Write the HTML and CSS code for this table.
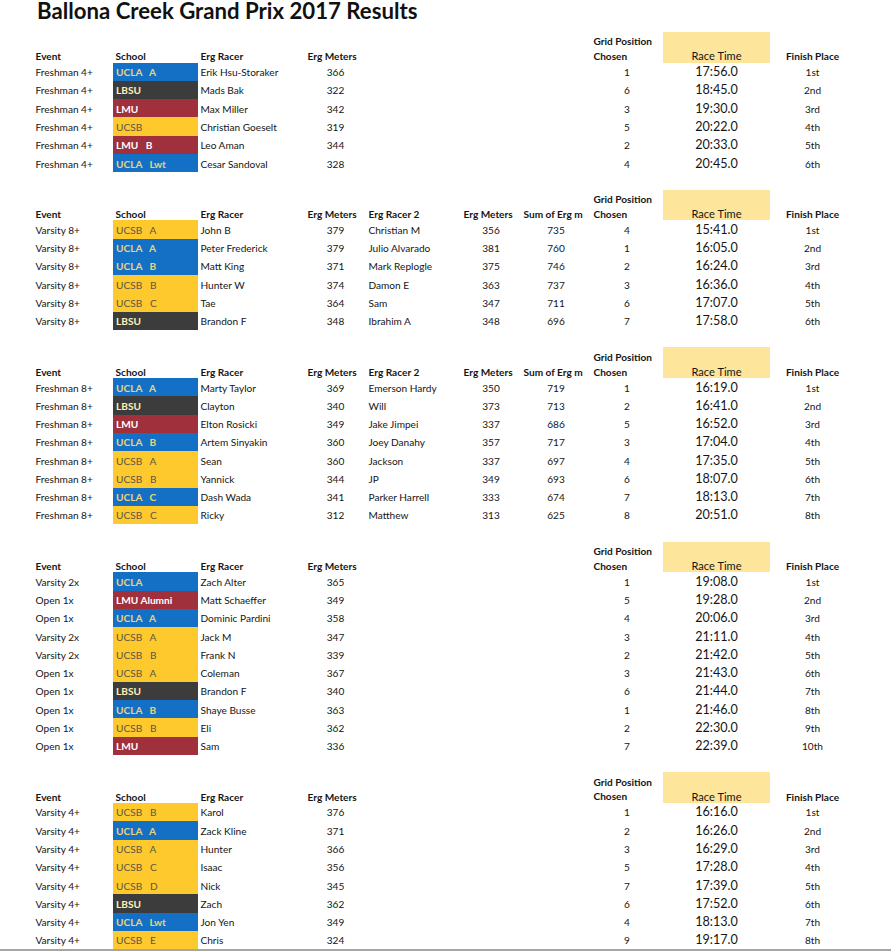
FILE: index.html
```html
<!DOCTYPE html>
<html lang="en">
<head>
<meta charset="utf-8">
<title>Ballona Creek Grand Prix 2017 Results</title>
<link rel="stylesheet" href="styles.css">
</head>
<body>
<h1 class="title">Ballona Creek Grand Prix 2017 Results</h1>

<section class="sheet">
  <div class="row head">
    <span>Event</span><span>School</span><span>Erg Racer</span><span>Erg Meters</span>
    <span class="c8 two">Grid Position<br>Chosen</span><span class="rt">Race Time</span><span class="ctr">Finish Place</span>
  </div>
  <div class="row"><span>Freshman 4+</span><span class="sch ucla">UCLA   A</span><span>Erik Hsu-Storaker</span><span class="ctr">366</span><span class="ctr c8">1</span><span class="time">17:56.0</span><span class="ctr">1st</span></div>
  <div class="row"><span>Freshman 4+</span><span class="sch lbsu">LBSU</span><span>Mads Bak</span><span class="ctr">322</span><span class="ctr c8">6</span><span class="time">18:45.0</span><span class="ctr">2nd</span></div>
  <div class="row"><span>Freshman 4+</span><span class="sch lmu">LMU</span><span>Max Miller</span><span class="ctr">342</span><span class="ctr c8">3</span><span class="time">19:30.0</span><span class="ctr">3rd</span></div>
  <div class="row"><span>Freshman 4+</span><span class="sch ucsb">UCSB</span><span>Christian Goeselt</span><span class="ctr">319</span><span class="ctr c8">5</span><span class="time">20:22.0</span><span class="ctr">4th</span></div>
  <div class="row"><span>Freshman 4+</span><span class="sch lmu">LMU   B</span><span>Leo Aman</span><span class="ctr">344</span><span class="ctr c8">2</span><span class="time">20:33.0</span><span class="ctr">5th</span></div>
  <div class="row"><span>Freshman 4+</span><span class="sch ucla">UCLA   Lwt</span><span>Cesar Sandoval</span><span class="ctr">328</span><span class="ctr c8">4</span><span class="time">20:45.0</span><span class="ctr">6th</span></div>
</section>

<section class="sheet">
  <div class="row head">
    <span>Event</span><span>School</span><span>Erg Racer</span><span>Erg Meters</span><span>Erg Racer 2</span><span>Erg Meters</span><span>Sum of Erg m</span>
    <span class="two">Grid Position<br>Chosen</span><span class="rt">Race Time</span><span class="ctr">Finish Place</span>
  </div>
  <div class="row"><span>Varsity 8+</span><span class="sch ucsb">UCSB   A</span><span>John B</span><span class="ctr">379</span><span>Christian M</span><span class="ctr">356</span><span class="ctr">735</span><span class="ctr">4</span><span class="time">15:41.0</span><span class="ctr">1st</span></div>
  <div class="row"><span>Varsity 8+</span><span class="sch ucla">UCLA   A</span><span>Peter Frederick</span><span class="ctr">379</span><span>Julio Alvarado</span><span class="ctr">381</span><span class="ctr">760</span><span class="ctr">1</span><span class="time">16:05.0</span><span class="ctr">2nd</span></div>
  <div class="row"><span>Varsity 8+</span><span class="sch ucla">UCLA   B</span><span>Matt King</span><span class="ctr">371</span><span>Mark Replogle</span><span class="ctr">375</span><span class="ctr">746</span><span class="ctr">2</span><span class="time">16:24.0</span><span class="ctr">3rd</span></div>
  <div class="row"><span>Varsity 8+</span><span class="sch ucsb">UCSB   B</span><span>Hunter W</span><span class="ctr">374</span><span>Damon E</span><span class="ctr">363</span><span class="ctr">737</span><span class="ctr">3</span><span class="time">16:36.0</span><span class="ctr">4th</span></div>
  <div class="row"><span>Varsity 8+</span><span class="sch ucsb">UCSB   C</span><span>Tae</span><span class="ctr">364</span><span>Sam</span><span class="ctr">347</span><span class="ctr">711</span><span class="ctr">6</span><span class="time">17:07.0</span><span class="ctr">5th</span></div>
  <div class="row"><span>Varsity 8+</span><span class="sch lbsu">LBSU</span><span>Brandon F</span><span class="ctr">348</span><span>Ibrahim A</span><span class="ctr">348</span><span class="ctr">696</span><span class="ctr">7</span><span class="time">17:58.0</span><span class="ctr">6th</span></div>
</section>

<section class="sheet">
  <div class="row head">
    <span>Event</span><span>School</span><span>Erg Racer</span><span>Erg Meters</span><span>Erg Racer 2</span><span>Erg Meters</span><span>Sum of Erg m</span>
    <span class="two">Grid Position<br>Chosen</span><span class="rt">Race Time</span><span class="ctr">Finish Place</span>
  </div>
  <div class="row"><span>Freshman 8+</span><span class="sch ucla">UCLA   A</span><span>Marty Taylor</span><span class="ctr">369</span><span>Emerson Hardy</span><span class="ctr">350</span><span class="ctr">719</span><span class="ctr">1</span><span class="time">16:19.0</span><span class="ctr">1st</span></div>
  <div class="row"><span>Freshman 8+</span><span class="sch lbsu">LBSU</span><span>Clayton</span><span class="ctr">340</span><span>Will</span><span class="ctr">373</span><span class="ctr">713</span><span class="ctr">2</span><span class="time">16:41.0</span><span class="ctr">2nd</span></div>
  <div class="row"><span>Freshman 8+</span><span class="sch lmu">LMU</span><span>Elton Rosicki</span><span class="ctr">349</span><span>Jake Jimpei</span><span class="ctr">337</span><span class="ctr">686</span><span class="ctr">5</span><span class="time">16:52.0</span><span class="ctr">3rd</span></div>
  <div class="row"><span>Freshman 8+</span><span class="sch ucla">UCLA   B</span><span>Artem Sinyakin</span><span class="ctr">360</span><span>Joey Danahy</span><span class="ctr">357</span><span class="ctr">717</span><span class="ctr">3</span><span class="time">17:04.0</span><span class="ctr">4th</span></div>
  <div class="row"><span>Freshman 8+</span><span class="sch ucsb">UCSB   A</span><span>Sean</span><span class="ctr">360</span><span>Jackson</span><span class="ctr">337</span><span class="ctr">697</span><span class="ctr">4</span><span class="time">17:35.0</span><span class="ctr">5th</span></div>
  <div class="row"><span>Freshman 8+</span><span class="sch ucsb">UCSB   B</span><span>Yannick</span><span class="ctr">344</span><span>JP</span><span class="ctr">349</span><span class="ctr">693</span><span class="ctr">6</span><span class="time">18:07.0</span><span class="ctr">6th</span></div>
  <div class="row"><span>Freshman 8+</span><span class="sch ucla">UCLA   C</span><span>Dash Wada</span><span class="ctr">341</span><span>Parker Harrell</span><span class="ctr">333</span><span class="ctr">674</span><span class="ctr">7</span><span class="time">18:13.0</span><span class="ctr">7th</span></div>
  <div class="row"><span>Freshman 8+</span><span class="sch ucsb">UCSB   C</span><span>Ricky</span><span class="ctr">312</span><span>Matthew</span><span class="ctr">313</span><span class="ctr">625</span><span class="ctr">8</span><span class="time">20:51.0</span><span class="ctr">8th</span></div>
</section>

<section class="sheet">
  <div class="row head">
    <span>Event</span><span>School</span><span>Erg Racer</span><span>Erg Meters</span>
    <span class="c8 two">Grid Position<br>Chosen</span><span class="rt">Race Time</span><span class="ctr">Finish Place</span>
  </div>
  <div class="row"><span>Varsity 2x</span><span class="sch ucla">UCLA</span><span>Zach Alter</span><span class="ctr">365</span><span class="ctr c8">1</span><span class="time">19:08.0</span><span class="ctr">1st</span></div>
  <div class="row"><span>Open 1x</span><span class="sch lmu">LMU Alumni</span><span>Matt Schaeffer</span><span class="ctr">349</span><span class="ctr c8">5</span><span class="time">19:28.0</span><span class="ctr">2nd</span></div>
  <div class="row"><span>Open 1x</span><span class="sch ucla">UCLA   A</span><span>Dominic Pardini</span><span class="ctr">358</span><span class="ctr c8">4</span><span class="time">20:06.0</span><span class="ctr">3rd</span></div>
  <div class="row"><span>Varsity 2x</span><span class="sch ucsb">UCSB   A</span><span>Jack M</span><span class="ctr">347</span><span class="ctr c8">3</span><span class="time">21:11.0</span><span class="ctr">4th</span></div>
  <div class="row"><span>Varsity 2x</span><span class="sch ucsb">UCSB   B</span><span>Frank N</span><span class="ctr">339</span><span class="ctr c8">2</span><span class="time">21:42.0</span><span class="ctr">5th</span></div>
  <div class="row"><span>Open 1x</span><span class="sch ucsb">UCSB   A</span><span>Coleman</span><span class="ctr">367</span><span class="ctr c8">3</span><span class="time">21:43.0</span><span class="ctr">6th</span></div>
  <div class="row"><span>Open 1x</span><span class="sch lbsu">LBSU</span><span>Brandon F</span><span class="ctr">340</span><span class="ctr c8">6</span><span class="time">21:44.0</span><span class="ctr">7th</span></div>
  <div class="row"><span>Open 1x</span><span class="sch ucla">UCLA   B</span><span>Shaye Busse</span><span class="ctr">363</span><span class="ctr c8">1</span><span class="time">21:46.0</span><span class="ctr">8th</span></div>
  <div class="row"><span>Open 1x</span><span class="sch ucsb">UCSB   B</span><span>Eli</span><span class="ctr">362</span><span class="ctr c8">2</span><span class="time">22:30.0</span><span class="ctr">9th</span></div>
  <div class="row"><span>Open 1x</span><span class="sch lmu">LMU</span><span>Sam</span><span class="ctr">336</span><span class="ctr c8">7</span><span class="time">22:39.0</span><span class="ctr">10th</span></div>
</section>

<section class="sheet">
  <div class="row head">
    <span>Event</span><span>School</span><span>Erg Racer</span><span>Erg Meters</span>
    <span class="c8 two">Grid Position<br>Chosen</span><span class="rt">Race Time</span><span class="ctr">Finish Place</span>
  </div>
  <div class="row"><span>Varsity 4+</span><span class="sch ucsb">UCSB   B</span><span>Karol</span><span class="ctr">376</span><span class="ctr c8">1</span><span class="time">16:16.0</span><span class="ctr">1st</span></div>
  <div class="row"><span>Varsity 4+</span><span class="sch ucla">UCLA   A</span><span>Zack Kline</span><span class="ctr">371</span><span class="ctr c8">2</span><span class="time">16:26.0</span><span class="ctr">2nd</span></div>
  <div class="row"><span>Varsity 4+</span><span class="sch ucsb">UCSB   A</span><span>Hunter</span><span class="ctr">366</span><span class="ctr c8">3</span><span class="time">16:29.0</span><span class="ctr">3rd</span></div>
  <div class="row"><span>Varsity 4+</span><span class="sch ucsb">UCSB   C</span><span>Isaac</span><span class="ctr">356</span><span class="ctr c8">5</span><span class="time">17:28.0</span><span class="ctr">4th</span></div>
  <div class="row"><span>Varsity 4+</span><span class="sch ucsb">UCSB   D</span><span>Nick</span><span class="ctr">345</span><span class="ctr c8">7</span><span class="time">17:39.0</span><span class="ctr">5th</span></div>
  <div class="row"><span>Varsity 4+</span><span class="sch lbsu">LBSU</span><span>Zach</span><span class="ctr">362</span><span class="ctr c8">6</span><span class="time">17:52.0</span><span class="ctr">6th</span></div>
  <div class="row"><span>Varsity 4+</span><span class="sch ucla">UCLA   Lwt</span><span>Jon Yen</span><span class="ctr">349</span><span class="ctr c8">4</span><span class="time">18:13.0</span><span class="ctr">7th</span></div>
  <div class="row"><span>Varsity 4+</span><span class="sch ucsb">UCSB   E</span><span>Chris</span><span class="ctr">324</span><span class="ctr c8">9</span><span class="time">19:17.0</span><span class="ctr">8th</span></div>
</section>

<div class="edge"></div>
</body>
</html>
```

FILE: styles.css
```css
html, body {
  margin: 0;
  padding: 0;
  background: #ffffff;
}

body {
  font-family: Lato, "Noto Sans", sans-serif;
  font-size: 10.1px;
  color: #151515;
  overflow: hidden;
}

.title {
  margin: 0;
  height: 32px;
  padding-left: 37px;
  font-size: 22.2px;
  font-weight: 700;
  line-height: 22px;
  color: #111;
  white-space: nowrap;
}

.sheet {
  margin-left: 33px;
  margin-bottom: 17.4px;
}

.sheet:last-of-type {
  margin-bottom: 0;
}

.row {
  display: grid;
  grid-template-columns: 80px 85px 107px 61px 95px 60px 70px 72px 107px 85px;
  height: 18.28px;
  align-items: stretch;
}

.row > span {
  padding: 1.5px 2.5px 0;
  line-height: 16.78px;
  white-space: pre;
  overflow: hidden;
}

.row.head {
  height: 30.7px;
  font-weight: 700;
  align-items: end;
}

.row.head > span {
  padding: 0 2.5px;
  line-height: 12.2px;
  white-space: nowrap;
}

.row.head > .two {
  line-height: 14.9px;
  margin-bottom: -1.4px;
  white-space: normal;
}

.row.head > .rt {
  align-self: stretch;
  display: flex;
  align-items: flex-end;
  justify-content: center;
  background: #fde59b;
  font-weight: 400;
  font-size: 11.1px;
  line-height: 12.2px;
}

.c8 {
  grid-column: 8;
}

.ctr {
  text-align: center;
}

.row > .time {
  text-align: center;
  font-size: 12.6px;
  padding-top: 0.5px;
  line-height: 17.78px;
}

.row > .sch {
  padding-left: 3px;
}

.ucla {
  background: #1470c4;
  color: #ecd27a;
  font-weight: 700;
}

.lbsu {
  background: #3c3c3c;
  color: #fff0b8;
  font-weight: 700;
}

.lmu {
  background: #a0303b;
  color: #ffffff;
  font-weight: 700;
}

.ucsb {
  background: #fdc92d;
  color: #5c5646;
}

.edge {
  height: 2px;
  background: #a6a6a0;
}
```
